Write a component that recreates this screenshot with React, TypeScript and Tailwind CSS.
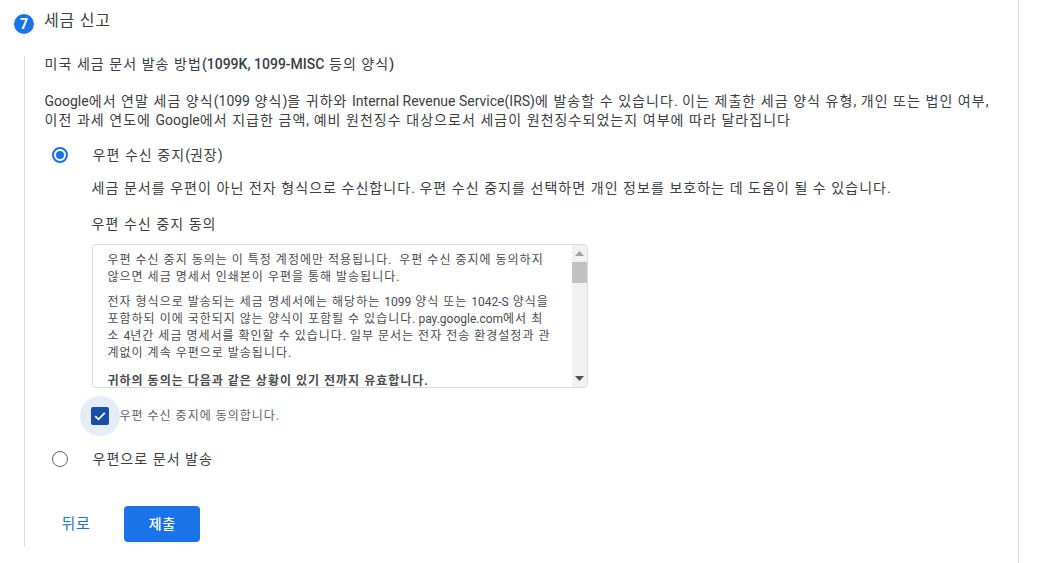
const font = { fontFamily: 'Roboto, "Noto Sans CJK KR", sans-serif' };

// hangul runs get wider tracking than the latin ones
function T({ text, ko, latin }: { text: string; ko: string; latin?: string }) {
  const parts = text.split(/([\uAC00-\uD7A3 \u00A0]+)/).filter(Boolean);
  return (
    <>
      {parts.map((part, i) =>
        /[\uAC00-\uD7A3]/.test(part) ? (
          <span key={i} className={ko}>{part}</span>
        ) : (
          <span key={i} className={latin}>{part}</span>
        )
      )}
    </>
  );
}

const body = 'text-[14px] tracking-[1.05px]';
const small = 'text-[12px] tracking-[1px]';

function ScrollArrow({ up }: { up?: boolean }) {
  return (
    <div className="flex h-[17px] items-center justify-center">
      <svg width="9" height="5" viewBox="0 0 9 5">
        <path d={up ? 'M4.5 0 L9 5 L0 5 Z' : 'M0 0 L9 0 L4.5 5 Z'} fill={up ? '#a3a3a3' : '#505050'} />
      </svg>
    </div>
  );
}

export default function App() {
  return (
    <main className="h-[563px] w-[1038px] overflow-hidden bg-white text-[#3c4043]" style={font}>
      <div className="h-[563px] w-[1019px] border-r border-[#dadce0] pt-[14px] pl-[14px]">
        <header className="flex h-5 items-center gap-[10px]">
          <span className="flex h-5 w-5 items-center justify-center rounded-full bg-[#1a73e8] text-[14px] font-bold text-white">
            7
          </span>
          <h2 className="-mt-[6px] text-[16px] tracking-[0.8px] text-[#3c4043]">세금 신고</h2>
        </header>

        <section className="mt-[22px] ml-[9.5px] h-[491px] w-[980px] border-l border-[#dadce0] pl-[20px]">
          <h3 className="text-[14px] leading-[16px]">
            <T text="미국 세금 문서 발송 방법(1099K, 1099-MISC 등의 양식)" ko={body} latin="font-medium" />
          </h3>
          <p className="mt-[20px] text-[14px] leading-[19px]">
            <T
              text="Google에서 연말 세금 양식(1099 양식)을 귀하와 Internal Revenue Service(IRS)에 발송할 수 있습니다. 이는 제출한 세금 양식 유형, 개인 또는 법인 여부,"
              ko={body}
            />
            <br />
            <T
              text="이전 과세 연도에 Google에서 지급한 금액, 예비 원천징수 대상으로서 세금이 원천징수되었는지 여부에 따라 달라집니다"
              ko={body}
            />
          </p>

          <div className="mt-[15px] flex h-5 items-center">
            <span className="ml-[7px] flex h-4 w-4 items-center justify-center rounded-full border-2 border-[#1a73e8]">
              <span className="h-2 w-2 rounded-full bg-[#1a73e8]" />
            </span>
            <span className="ml-[25px] text-[14px]">
              <T text="우편 수신 중지(권장)" ko={body} />
            </span>
          </div>

          <div className="pl-[47px]">
            <p className="mt-[13px] text-[14px] leading-[20px]">
              <T text="세금 문서를 우편이 아닌 전자 형식으로 수신합니다. 우편 수신 중지를 선택하면 개인 정보를 보호하는 데 도움이 될 수 있습니다." ko={body} />
            </p>
            <p className="mt-[16px] text-[14px] leading-[20px]">
              <T text="우편 수신 중지 동의" ko={body} />
            </p>

            <div className="mt-[10px] flex h-[144px] w-[496px] overflow-hidden rounded-[4px] border border-[#dadce0]">
              <div className="flex-1 pt-[7px] pr-[16px] pl-[15px] text-[12px] leading-[17px] text-[#4a4d50]">
                <p>
                  <T text={'우편 수신 중지 동의는 이 특정 계정에만 적용됩니다. \u00A0우편 수신 중지에 동의하지 않으면 세금 명세서 인쇄본이 우편을 통해 발송됩니다.'} ko={small} />
                </p>
                <p className="mt-[8px]">
                  <T text="전자 형식으로 발송되는 세금 명세서에는 해당하는 1099 양식 또는 1042-S 양식을 포함하되 이에 국한되지 않는 양식이 포함될 수 있습니다. pay.google.com에서 최" ko={small} />
                  <br />
                  <T text="소 4년간 세금 명세서를 확인할 수 있습니다. 일부 문서는 전자 전송 환경설정과 관" ko={small} />
                  <br />
                  <T text="계없이 계속 우편으로 발송됩니다." ko={small} />
                </p>
                <p className="mt-[11px] font-bold">
                  <T text="귀하의 동의는 다음과 같은 상황이 있기 전까지 유효합니다." ko={small} />
                </p>
              </div>
              <div className="flex w-[15px] flex-col bg-[#f1f1f1]">
                <ScrollArrow up />
                <div className="h-[21px] bg-[#c1c1c1]" />
                <div className="flex-1" />
                <ScrollArrow />
              </div>
            </div>

            <div className="mt-[8px] flex h-[40px] items-center">
              <span className="-ml-[12px] flex h-10 w-10 items-center justify-center rounded-full bg-[#e4edf8]">
                <span className="flex h-[18px] w-[18px] items-center justify-center rounded-[2px] bg-[#174ea6]">
                  <svg width="14" height="14" viewBox="0 0 14 14" fill="none">
                    <path d="M2.2 7.2 L5.5 10.4 L11.8 3.8" stroke="white" strokeWidth="1.7" />
                  </svg>
                </span>
              </span>
              <span className="text-[12px] text-[#5f6368]">
                <T text="우편 수신 중지에 동의합니다." ko={small} />
              </span>
            </div>
          </div>

          <div className="mt-[13px] flex h-5 items-center">
            <span className="ml-[7px] h-4 w-4 rounded-full border-[1.5px] border-[#5f6368]" />
            <span className="ml-[25px] text-[14px]">
              <T text="우편으로 문서 발송" ko={body} />
            </span>
          </div>

          <div className="mt-[37px] flex items-center">
            <button type="button" className="ml-[17px] text-[15px] tracking-[0.6px] text-[#1976d2]">뒤로</button>
            <button type="button" className="ml-[34px] h-[36px] w-[76px] rounded-[4px] bg-[#1a73e8] text-[14px] font-medium tracking-[0.6px] text-white">제출</button>
          </div>
        </section>
      </div>
    </main>
  );
}
